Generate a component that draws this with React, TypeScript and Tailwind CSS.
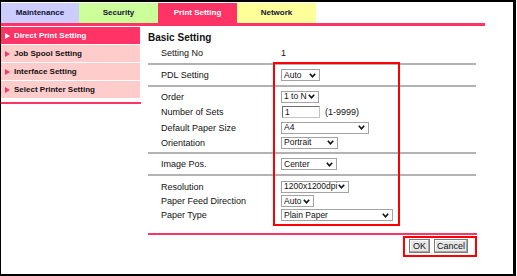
import React from "react";

const Chevron = () => (
  <svg width="7" height="5" viewBox="0 0 7 5" className="shrink-0">
    <polyline points="0.8,0.8 3.5,3.8 6.2,0.8" fill="none" stroke="#111" strokeWidth="1.6" />
  </svg>
);

const Select = ({ w, text }: { w: string; text: string }) => (
  <div
    className={`${w} h-[12px] border border-[#a3a3a3] bg-white flex items-center justify-between pl-[2px] pr-[3px] overflow-hidden`}
  >
    <span className="text-[8.5px] leading-none whitespace-nowrap text-[#111]">{text}</span>
    <Chevron />
  </div>
);

const Row = ({ h, label, children }: { h: string; label: string; children?: React.ReactNode }) => (
  <div className={`flex items-center ${h}`}>
    <div className="w-[133px] pl-[13px] text-[9px] leading-[14px] text-[#111] whitespace-nowrap">{label}</div>
    <div className="flex items-center">{children}</div>
  </div>
);

const GrayLine = () => <div className="h-[2px] w-[328px] bg-[#b2b2b2]" />;

const Tri = ({ color }: { color: string }) => (
  <svg width="5" height="6" viewBox="0 0 5 6" className="shrink-0">
    <polygon points="0,0 5,3 0,6" fill={color} />
  </svg>
);

const SideItem = ({ text, active }: { text: string; active?: boolean }) => (
  <div
    className={`h-[17px] flex items-center pl-[4px] gap-[4px] ${active ? "bg-[#ff3366] text-white" : "bg-[#ffcccc] text-[#111]"}`}
  >
    <Tri color={active ? "#ffffff" : "#ff3366"} />
    <span className="text-[8px] font-bold leading-none whitespace-nowrap">{text}</span>
  </div>
);

const Btn = ({ w, text }: { w: string; text: string }) => (
  <div
    className={`${w} h-[14px] flex items-center justify-center border border-[#7c7c7c] bg-[#e6e6e6] shadow-[inset_-1px_-1px_0_#a8a8a8,inset_1px_1px_0_#ffffff] text-[9px] leading-none text-[#111]`}
  >
    {text}
  </div>
);

export default function App() {
  return (
    <div className="w-[517px] h-[276px] bg-white">
      <div className="relative w-[516px] h-[276px] border-t-2 border-r-[3px] border-b-2 border-l border-black bg-white font-['Liberation_Sans',Arial,sans-serif]">
        {/* Tabs */}
        <div className="flex mt-[1px] h-[20px]">
          <div className="w-[78px] bg-[#ccccff] flex items-center justify-center text-[8px] font-bold text-[#111133]">Maintenance</div>
          <div className="w-[79px] bg-[#ccff99] flex items-center justify-center text-[8px] font-bold text-[#111133]">Security</div>
          <div className="w-[79px] bg-[#ff3366] flex items-center justify-center text-[8px] font-bold text-white">Print Setting</div>
          <div className="w-[79px] bg-[#ffff99] flex items-center justify-center text-[8px] font-bold text-[#111133]">Network</div>
        </div>
        <div className="h-[3px] w-[484px] bg-[#ff3366]" />

        {/* Body */}
        <div className="flex mt-[1px]">
          {/* Sidebar */}
          <div className="flex flex-col">
            <div className="w-[139px] flex flex-col gap-[1px]">
              <SideItem text="Direct Print Setting" active />
              <SideItem text="Job Spool Setting" />
              <SideItem text="Interface Setting" />
              <SideItem text="Select Printer Setting" />
            </div>
            <div className="mt-[4px] h-[2px] w-[140px] bg-[#ff3366]" />
          </div>

          {/* Main */}
          <div className="ml-[7px] w-[329px] flex flex-col">
            <div className="pt-[5px] text-[10px] leading-[12px] font-bold text-[#111]">Basic Setting</div>
            <div className="mt-[2px] flex items-center h-[14px]">
              <div className="w-[133px] pl-[13px] text-[9px] leading-[14px] text-[#111]">Setting No</div>
              <div className="text-[9px] leading-[14px] text-[#111]">1</div>
            </div>
            <div className="mt-[3px]">
              <GrayLine />
            </div>
            <Row h="h-[20px]" label="PDL Setting">
              <Select w="w-[39px]" text="Auto" />
            </Row>
            <GrayLine />
            <div className="pt-[2px] pb-[2px] flex flex-col">
              <Row h="h-[15px]" label="Order">
                <Select w="w-[38px]" text="1 to N" />
              </Row>
              <Row h="h-[16px]" label="Number of Sets">
                <div className="ml-[1px] w-[38px] h-[12px] border border-[#6e6e6e] border-r-[#c4c4c4] border-b-[#c4c4c4] bg-white flex items-center pl-[2px] text-[8.5px] leading-none text-[#111]">
                  1
                </div>
                <span className="ml-[5px] text-[9px] leading-none text-[#111]">(1-9999)</span>
              </Row>
              <Row h="h-[15px]" label="Default Paper Size">
                <Select w="w-[88px]" text="A4" />
              </Row>
              <Row h="h-[15px]" label="Orientation">
                <Select w="w-[57px]" text="Portrait" />
              </Row>
            </div>
            <GrayLine />
            <Row h="h-[20px]" label="Image Pos.">
              <Select w="w-[56px]" text="Center" />
            </Row>
            <GrayLine />
            <div className="pt-[3px] flex flex-col">
              <Row h="h-[15px]" label="Resolution">
                <Select w="w-[68px]" text="1200x1200dpi" />
              </Row>
              <Row h="h-[14px]" label="Paper Feed Direction">
                <Select w="w-[33px]" text="Auto" />
              </Row>
              <Row h="h-[14px]" label="Paper Type">
                <Select w="w-[112px]" text="Plain Paper" />
              </Row>
            </div>
            <div className="mt-[11px] h-[2px] w-[329px] bg-[#ff3366]" />
            <div className="mt-[4px] flex justify-end pr-[9px] gap-[4px]">
              <Btn w="w-[21px]" text="OK" />
              <Btn w="w-[34px]" text="Cancel" />
            </div>
          </div>
        </div>

        {/* Annotation boxes */}
        <div className="absolute left-[272px] top-[60px] w-[127px] h-[164px] border-2 border-[#ff0000]" />
        <div className="absolute left-[402px] top-[234px] w-[74px] h-[21px] border-2 border-[#ff0000]" />
      </div>
    </div>
  );
}
